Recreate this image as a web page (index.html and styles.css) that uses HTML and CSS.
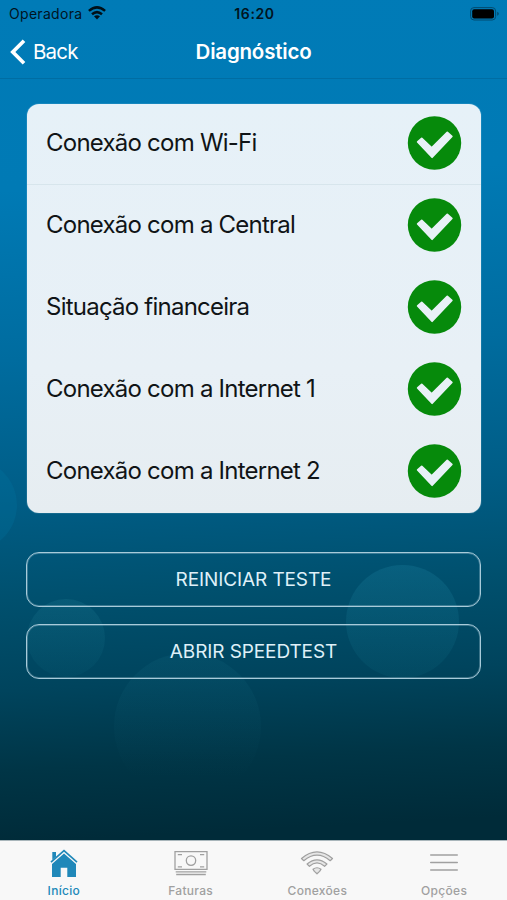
FILE: index.html
```html
<!DOCTYPE html>
<html lang="pt-BR">
<head>
<meta charset="utf-8">
<title>Diagnóstico</title>
<link rel="stylesheet" href="styles.css">
</head>
<body>
<svg width="0" height="0" class="defs">
  <symbol id="check" viewBox="0 0 54 54">
    <circle cx="27" cy="27" r="26.7" fill="#068a0b"/>
    <path d="M10.2 26 14.2 22.4 24.2 32 39.8 16.4 44.3 20.4 24.6 41.2Z" fill="#e8f1f7" stroke="#e8f1f7" stroke-width="1.8" stroke-linejoin="round"/>
  </symbol>
</svg>
<div class="app">
  <div class="bubbles">
    <i class="bubble b1"></i><i class="bubble b2"></i><i class="bubble b3"></i><i class="bubble b4"></i>
  </div>
  <header>
    <div class="status">
      <div class="carrier"><span>Operadora</span>
        <svg width="18" height="14" viewBox="0 0 18 14" fill="none" stroke="#001018" stroke-width="2.5"><path d="M.9 4.9Q9-2.1 17.1 4.9M4 8.3Q9 4 14 8.3"/><path d="M6 10.3Q9 8 12 10.3L9 13.4Z" fill="#001018" stroke="none"/></svg>
      </div>
      <span class="time">16:20</span>
      <svg class="battery" width="30" height="14" viewBox="0 0 30 14"><rect x=".6" y=".6" width="25" height="12.4" rx="3.4" fill="none" stroke="#004b70" stroke-width="1"/><rect x="2.2" y="2.2" width="21.8" height="9.2" rx="2" fill="#000"/><path d="M27.2 4.8q1.6.6 1.6 2t-1.6 2z" fill="#004b70"/></svg>
    </div>
    <nav class="navbar">
      <div class="back"><svg width="16" height="26" viewBox="0 0 16 26"><path d="M14 1.8 2.8 13 14 24.2" fill="none" stroke="#fff" stroke-width="3.7"/></svg><span>Back</span></div>
      <h1>Diagnóstico</h1>
    </nav>
  </header>
  <main>
    <ul class="card">
      <li><span>Conexão com Wi-Fi</span><svg><use href="#check"/></svg></li>
      <li><span>Conexão com a Central</span><svg><use href="#check"/></svg></li>
      <li><span>Situação financeira</span><svg><use href="#check"/></svg></li>
      <li><span>Conexão com a Internet 1</span><svg><use href="#check"/></svg></li>
      <li><span>Conexão com a Internet 2</span><svg><use href="#check"/></svg></li>
    </ul>
    <button>REINICIAR TESTE</button>
    <button>ABRIR SPEEDTEST</button>
  </main>
  <footer>
    <div class="tab active"><svg width="28" height="28" viewBox="0 0 28 28" fill="#2088b9"><path d="M2.3 3H6v4.8L2.3 11z"/><path d="M1 13.2 14 1.7 27 13.2" fill="none" stroke="#2088b9" stroke-width="1.7"/><path d="M14 4.6 26 15.1V28H17.3V18.7H10.7V28H2V15.1z"/></svg><span>Início</span></div>
    <div class="tab"><svg width="34" height="28" viewBox="0 0 34 28" fill="none" stroke="#a0a0a0" stroke-width="1.3"><path d="M1 2.7H33V20.4H1zM1.7 22.8H32.3M2.2 25.5H31.8"/><circle cx="17" cy="11.6" r="4.7"/><path d="M3.8 5.6H8M26 5.6h4.2M3.8 17.8H8m18 0h4.2"/></svg><span>Faturas</span></div>
    <div class="tab"><svg width="34" height="28" viewBox="0 0 34 28" fill="#e6e6e6" stroke="#a0a0a0" stroke-width="1.2" stroke-linejoin="round"><path d="M1.5 9.5Q17-3.7 32.5 9.5L30.2 11.7Q17 .5 3.8 11.7zM7.1 15Q17 6.7 26.9 15l-2.3 2.3Q17 10.6 9.4 17.3zM13 20.2Q17 17.3 21 20.2L19.6 22.4 17 24.8 14.4 22.4z"/></svg><span>Conexões</span></div>
    <div class="tab"><svg width="28" height="28" viewBox="0 0 28 28"><path d="M.7 6H27.3M.7 13.5H27.3M.7 21H27.3" stroke="#a0a0a0" stroke-width="1.4" stroke-linecap="round"/></svg><span>Opções</span></div>
  </footer>
</div>
</body>
</html>
```
FILE: styles.css
```css
* { box-sizing: border-box; }
body { margin: 0; font-family: Inter, "Liberation Sans", sans-serif; }
.defs { position: absolute; }
.app {
  position: relative;
  width: 507px;
  height: 900px;
  display: flex;
  flex-direction: column;
  overflow: hidden;
  background: linear-gradient(177deg, #007bb7 0, #007ab5 190px, #006c9f 360px, #005d86 500px, #00506e 600px, #00445d 690px, #003546 770px, #002b39 842px);
}
.bubbles { position: absolute; inset: 0; }
.bubble { position: absolute; border-radius: 50%; }
.b1 { left: -70px; top: 460px; width: 87px; height: 90px; background: rgba(0, 125, 170, .22); }
.b2 { left: 27px; top: 599px; width: 78px; height: 78px; background: linear-gradient(rgba(50, 150, 170, .16), rgba(20, 130, 150, .07)); }
.b3 { left: 346px; top: 565px; width: 113px; height: 113px; background: linear-gradient(rgba(40, 150, 180, .2), rgba(20, 130, 150, .1)); }
.b4 { left: 114px; top: 653px; width: 147px; height: 147px; background: linear-gradient(rgba(40, 140, 160, .1), rgba(20, 130, 150, 0) 85%); }
header, main, footer { position: relative; }
header { height: 79px; border-bottom: 1px solid #006da3; }
.status { height: 27px; padding: 0 7px 0 9px; display: grid; grid-template-columns: 1fr auto 1fr; align-items: center; color: #00141f; font-size: 14px; }
.carrier { display: flex; align-items: center; gap: 6px; }
.carrier span { letter-spacing: .3px; }
.carrier svg { margin-top: -1px; }
.time { font-weight: 600; letter-spacing: .6px; }
.battery { justify-self: end; }
.navbar { height: 49px; padding: 0 10px; display: grid; grid-template-columns: 1fr auto 1fr; align-items: center; color: #fff; }
.back { display: flex; align-items: center; gap: 7px; font-size: 20.5px; letter-spacing: -.8px; }
h1 { margin: 0; font-size: 20.5px; font-weight: 600; letter-spacing: -.2px; }
main { flex: 1; padding: 25px 26px 0 26px; }
.card { list-style: none; margin: 0 0 39px 1px; padding: 0; height: 409px; border-radius: 12px; background: linear-gradient(#e6f1f8, #e8f0f6 65%, #e6edf1); display: flex; flex-direction: column; box-shadow: 0 0 1px #d5edf8; }
.card li { flex: 1; display: flex; align-items: center; justify-content: space-between; padding: 0 19px 3px 19px; font-size: 24px; color: #101416; letter-spacing: -.77px; }
.card li:first-child { flex: 0 0 81px; border-bottom: 1px solid #d7e5ec; }
.card svg { width: 55px; height: 54px; margin-top: 1px; }
button { display: block; width: 100%; height: 55px; margin: 0 0 17px; border: 1px solid #a8cbda; box-shadow: inset 0 0 0 1px rgba(168, 203, 218, .35); border-radius: 13px; background: transparent; color: #dff0f8; font: 19px Inter, "Liberation Sans", sans-serif; letter-spacing: -.1px; }
footer { height: 60px; background: #f8f8f8; border-top: 1px solid #a9b6bb; display: grid; grid-template-columns: repeat(4, 1fr); }
.tab { display: flex; flex-direction: column; align-items: center; padding: 8px 0 0 1px; color: #a0a0a0; font-size: 12px; font-weight: 500; line-height: 15px; letter-spacing: .3px; }
.tab span { margin-top: 6px; }
.active { color: #2088b9; }
```
